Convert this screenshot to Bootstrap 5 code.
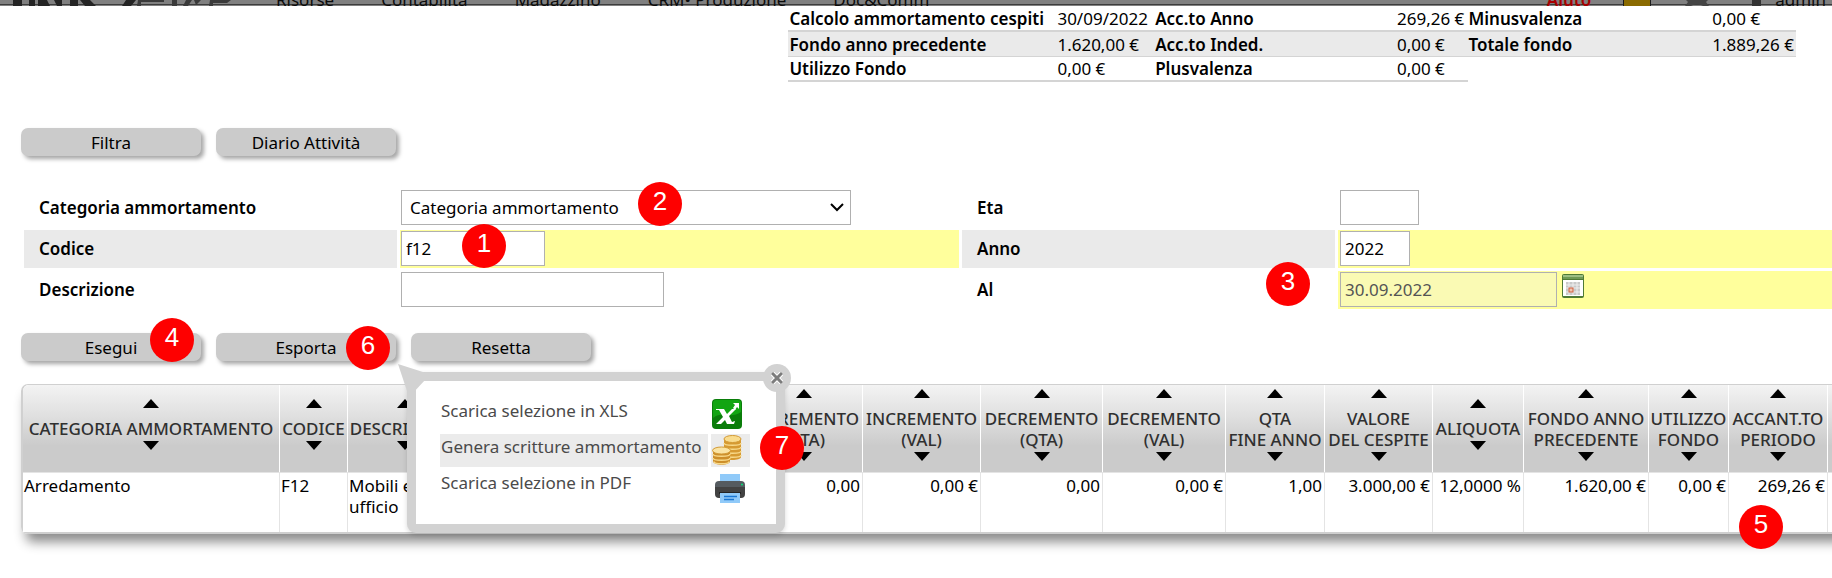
<!DOCTYPE html>
<html lang="it">
<head>
<meta charset="utf-8">
<meta name="viewport" content="width=device-width, initial-scale=1">
<title>Calcolo ammortamento cespiti</title>
<link rel="stylesheet" href="https://cdn.jsdelivr.net/npm/bootstrap@5.3.0/dist/css/bootstrap.min.css">
<style>
  body { font-family: "Noto Sans", "Open Sans", sans-serif; font-size: 17px; line-height: 21px; color: #000; background: #fff; overflow-x: hidden; }

  /* strip of the main menu left visible under the scrolled page */
  .topbar { height: 6px; overflow: hidden; background: linear-gradient(#808080 4px, #3c3c3c 4px, #3c3c3c 5px, #808080 5px); line-height: 12px; padding-left: 10px; padding-right: 6px; }
  .topbar a { color: #0c0c0c; text-decoration: none; white-space: nowrap; }
  .brand { width: 266px; height: 6px; flex: none; }
  .topbar .help { color: #a80000; font-weight: 600; }
  .menu-main { gap: 47px; }

  /* totals */
  .totals { width: 55%; margin-right: 36px; table-layout: fixed; border-collapse: collapse; white-space: nowrap; }
  .totals th, .totals td { padding: 1px 0 0 1px; height: 25px; border-bottom: 2px solid #d4d4d4; text-align: left; vertical-align: middle; }
  .totals th { font-weight: 600; }
  .totals .alt th, .totals .alt td { background: #eaeaea; border-bottom-width: 1px; }
  .totals .blank { border: 0; }

  /* grey action buttons */
  .actions { gap: 15px; padding-left: 21px; margin-top: 24px; }
  .actions.first { margin-top: 46px; }
  .act { width: 180px; height: 28px; border: 0; border-radius: 7px; background: #cbcbcb; color: #000; box-shadow: 3px 3px 4px #a6a6a6; padding: 0; }

  /* filter form */
  .filters { display: grid; grid-template-columns: 373fr 559fr 373fr 494fr; gap: 3px; padding-left: 24px; margin-top: 33px; }
  .filters > * { height: 38px; }
  .filters label { padding: 8px 0 0 15px; font-weight: 600; }
  .cell { padding: 1px 0 0 1px; position: relative; display: flex; align-items: flex-start; }
  .cell.wide { padding-left: 2px; }
  .shade { background: #eaeaea; }
  .req { background: #ffff9c; }
  .fld { height: 35px; border: 1px solid #b0b0b0; border-radius: 0; background: #fff; color: #000; padding: 0 4px; }
  .fld:disabled { background: #fafab4; color: #545454; opacity: 1; }
  .fld-select { width: 450px; padding: 0 28px 0 8px; appearance: none; background: #fff url("data:image/svg+xml,%3Csvg xmlns='http://www.w3.org/2000/svg' width='14' height='9'%3E%3Cpath d='M1 1l6 6 6-6' fill='none' stroke='%23000' stroke-width='2'/%3E%3C/svg%3E") no-repeat right 6px center; }
  .w-code { width: 144px; } .w-desc { width: 263px; } .w-age { width: 79px; } .w-year { width: 70px; } .w-date { width: 217px; }

  /* numbered markers laid over the page */
  .pin { position: absolute; z-index: 5; width: 44px; height: 44px; border-radius: 50%; background: #fe0000; color: #fff; font: 26px/38px "Liberation Sans", Arial, sans-serif; text-align: center; }
  .pin-1 { left: 62px; top: -6px; } .pin-2 { left: 238px; top: -7px; } .pin-3 { left: -72px; top: -9px; }
  .pin-4 { left: 129px; top: -15px; } .pin-6 { left: 130px; top: -7px; } .pin-7 { left: 344px; top: 45px; } .pin-5 { left: 10px; top: 32px; }

  /* export menu */
  .export-menu { position: absolute; z-index: 3; left: 191px; top: 39px; width: 378px; height: 161px; border: 9px solid #d2d2d2; border-radius: 9px; background: #fff; box-shadow: 0 2px 5px rgba(0,0,0,.15); }
  .tail { position: absolute; left: -18px; top: -17px; }
  .closer { position: absolute; right: -15px; top: -17px; width: 28px; height: 28px; border: 0; border-radius: 50%; background: #d2d2d2; padding: 0; display: flex; align-items: center; justify-content: center; }
  .choices { padding: 17px 26px 0 24px; gap: 3px; }
  .choice { display: grid; grid-template-columns: 1fr 39px; gap: 3px; height: 33px; color: #4a4a4a; text-decoration: none; }
  .choice span { padding: 2px 0 0 1px; white-space: nowrap; }
  .choice svg { display: block; margin: 1px 0 0 1px; }
  .choice.current > * , .choice.current .pic { background: #ebebeb; }

  /* asset grid */
  .grid-wrap { padding: 0 0 30px 21px; margin-top: 23px; overflow: hidden; }
  .assets { width: 1908px; table-layout: fixed; border-collapse: separate; border-spacing: 0; border: 1px solid #d0d0d0; border-left-width: 2px; border-bottom: 2px solid #cfcfcf; border-radius: 7px 0 0 7px; box-shadow: 4px 9px 12px -1px #8c8c8c; }
  .assets th { height: 87px; padding: 0 0 8px; vertical-align: middle; text-align: center; font-weight: 500; color: #303030; background: linear-gradient(#f3f3f3, #e0e0e0 35%, #cbcbcb 70%); border-right: 1px solid #fff; white-space: nowrap; }
  .assets th:first-child { border-top-left-radius: 6px; }
  .assets td { position: relative; height: 60px; padding: 2px 1px 0; vertical-align: top; background: #fff; border-right: 1px solid #e4e4e4; border-top: 1px solid #e4e4e4; }
  .assets td.num { text-align: right; padding-right: 2px; white-space: nowrap; }
  .assets th::before, .assets th::after { content: ""; display: block; width: 0; margin: 0 auto; border: 8px solid transparent; }
  .assets th::before { border-top: 0; border-bottom: 9px solid #000; margin-bottom: 10px; }
  .assets th::after { border-bottom: 0; border-top: 9px solid #000; margin-top: 2px; }
</style>
</head>
<body>

<header class="topbar d-flex align-items-end">
  <svg class="brand" viewBox="0 0 266 6" role="img" aria-label="UNO ERP">
    <path d="M3 0h9v6H3zM19 0h6v6h-6zM28 0h9l3 6H28zM44 0h8v6h-5zM60 0h8v6h-8zM70 0h10l6 6H75zM116 0h10l-5 6h-9z" fill="#242424"/>
    <path d="M128 0h26v2h-23v4h-4zM162 0h5v6h-5zM176 0h6l-4 6h-5zM184 0h7l-5 5zM200 0h21l-4 3h-14v3h-4z" fill="#3a3a3a"/>
  </svg>
  <nav class="menu-main d-flex flex-grow-1">
    <a href="#">Risorse</a><a href="#">Contabilità</a><a href="#">Magazzino</a><a href="#">CRM• Produzione</a><a href="#">Doc&amp;Comm</a>
  </nav>
  <nav class="d-flex align-items-end">
    <a href="#" class="help">Aiuto</a>
    <svg class="ms-4" width="160" height="6" aria-hidden="true">
      <path d="M8 0h28v6H8z" fill="#1c1c1c"/><path d="M9 0h26v6H9z" fill="#8a6a00"/>
      <path d="M70 6l3-4-2-2h22l-2 2 3 4h-6a8 5 0 0 0-12 0z" fill="#444"/><path d="M137 0h9v6h-9z" fill="#333"/>
    </svg>
    <a href="#">admin</a>
  </nav>
</header>

<main>
  <table class="totals ms-auto">
    <colgroup><col style="width:26.6%"><col style="width:9.7%"><col style="width:24%"><col style="width:7.1%"><col style="width:24.2%"><col style="width:8.4%"></colgroup>
    <tbody>
      <tr><th scope="row">Calcolo ammortamento cespiti</th><td>30/09/2022</td><th scope="row">Acc.to Anno</th><td>269,26 €</td><th scope="row">Minusvalenza</th><td>0,00 €</td></tr>
      <tr class="alt"><th scope="row">Fondo anno precedente</th><td>1.620,00 €</td><th scope="row">Acc.to Inded.</th><td>0,00 €</td><th scope="row">Totale fondo</th><td>1.889,26 €</td></tr>
      <tr><th scope="row">Utilizzo Fondo</th><td>0,00 €</td><th scope="row">Plusvalenza</th><td>0,00 €</td><td class="blank" colspan="2"></td></tr>
    </tbody>
  </table>

  <div class="actions first d-flex">
    <button type="button" class="act">Filtra</button>
    <button type="button" class="act">Diario Attività</button>
  </div>

  <form class="mb-0">
    <div class="filters">
      <label for="categoria">Categoria ammortamento</label>
      <div class="cell">
        <select id="categoria" class="fld fld-select"><option>Categoria ammortamento</option></select>
        <span class="pin pin-2">2</span>
      </div>
      <label for="eta">Eta</label>
      <div class="cell wide"><input id="eta" type="text" class="fld w-age"></div>

      <label for="codice" class="shade">Codice</label>
      <div class="cell req">
        <input id="codice" type="text" class="fld w-code" value="f12">
        <span class="pin pin-1">1</span>
      </div>
      <label for="anno" class="shade">Anno</label>
      <div class="cell wide req"><input id="anno" type="text" class="fld w-year" value="2022"></div>

      <label for="descrizione">Descrizione</label>
      <div class="cell"><input id="descrizione" type="text" class="fld w-desc"></div>
      <label for="al">Al</label>
      <div class="cell wide req">
        <input id="al" type="text" class="fld w-date" value="30.09.2022" disabled>
        <svg class="ms-1" width="24" height="27" viewBox="0 -2 24 27" role="img" aria-label="Calendario">
          <rect x="1" y="0" width="22" height="24" rx="2" fill="#4f7a35"/>
          <rect x="2" y="1" width="20" height="2" fill="#9cbf83"/><rect x="2" y="3" width="20" height="2" fill="#6f9a55"/>
          <rect x="2" y="6" width="20" height="16" fill="#fff"/>
          <rect x="5" y="8" width="14" height="13" fill="#c9c9c9"/>
          <path d="M5 11h14M5 14h14M5 18h14M8 8v13M12 8v13M16 8v13" stroke="#eee"/>
          <rect x="8" y="14" width="4" height="4" fill="#f2c4b0" stroke="#cf5e3c"/>
        </svg>
        <span class="pin pin-3">3</span>
      </div>
    </div>

    <div class="actions d-flex">
      <div class="position-relative"><button type="button" class="act">Esegui</button><span class="pin pin-4">4</span></div>
      <div class="position-relative">
        <button type="button" class="act" aria-expanded="true">Esporta</button><span class="pin pin-6">6</span>
        <div class="export-menu">
          <svg class="tail" width="30" height="30" aria-hidden="true"><path d="M0 0l28 9v6l-14 15h-4z" fill="#d2d2d2"/></svg>
          <button type="button" class="closer" aria-label="Chiudi"><svg width="12" height="12"><path d="M1 1l10 10M11 1L1 11" stroke="#fff" stroke-width="5"/><path d="M1 1l10 10M11 1L1 11" stroke="#7c7c7c" stroke-width="3"/></svg></button>
          <div class="choices d-flex flex-column">
            <a href="#" class="choice"><span>Scarica selezione in XLS</span>
              <span class="pic p-0"><svg width="30" height="30" viewBox="0 0 30 30" aria-hidden="true">
                <rect width="30" height="30" rx="4" fill="#0a7d0a"/><path d="M1 4a3 3 0 0 1 3-3h22a3 3 0 0 1 3 3v9C20 20 10 12 1 19z" fill="#12a512"/>
                <path d="M4 10h8l3 5 5-5h4l-7 7 3 6 3-1-1 3h-7l-2-4-4 4H4l7-7-4-7H4z" fill="#fff"/><path d="M21 4h6v6l-2-2-2 3-2-2 2-3z" fill="#fff"/></svg></span></a>
            <a href="#" class="choice current"><span>Genera scritture ammortamento</span>
              <span class="pic p-0"><svg width="30" height="30" viewBox="0 0 30 30" aria-hidden="true">
                <path d="M12 4v18c0 4 17 4 17 0V4z" fill="#d69a32"/>
                <path d="M12 8c0 3 17 3 17 0M12 12c0 3 17 3 17 0M12 16c0 3 17 3 17 0M12 20c0 3 17 3 17 0" fill="none" stroke="#f8d98a" stroke-width="1.500"/>
                <ellipse cx="20.500" cy="4" rx="8.500" ry="3.500" fill="#f9dc8e" stroke="#d39a35"/>
                <path d="M1 15v11c0 5 17 5 17 0V15z" fill="#cd8f2b"/>
                <path d="M1 19c0 3 17 3 17 0M1 23c0 3 17 3 17 0M2 26.500c0 3 15 3 15 0" fill="none" stroke="#f8d98a" stroke-width="1.500"/>
                <ellipse cx="9.500" cy="15.500" rx="9" ry="3.500" fill="#fae4a4" stroke="#d39a35"/></svg></span></a>
            <a href="#" class="choice"><span>Scarica selezione in PDF</span>
              <span class="pic p-0 ps-1 pt-1"><svg class="m-0" width="30" height="29" viewBox="0 0 30 29" aria-hidden="true">
                <path d="M5 0h20v9H5z" fill="#90caf9"/><path d="M4 7h22a4 4 0 0 1 4 4v4H0v-4a4 4 0 0 1 4-4z" fill="#555b60"/>
                <path d="M0 13h30v7a4 4 0 0 1-4 4H4a4 4 0 0 1-4-4z" fill="#424242"/><path d="M4 18h22v2H4z" fill="#242424"/>
                <circle cx="27" cy="10.500" r="1" fill="#00e676"/><path d="M5 19h20v10H5z" fill="#90caf9"/><path d="M9 22.500h13M9 25.500h10" stroke="#1976d2" stroke-width="1.500"/></svg></span></a>
          </div>
          <span class="pin pin-7">7</span>
        </div>
      </div>
      <button type="reset" class="act">Resetta</button>
    </div>
  </form>

  <div class="grid-wrap">
    <table class="assets">
      <colgroup><col style="width:257px"><col style="width:68px"><col style="width:115px"><col style="width:282px"><col style="width:118px"><col style="width:118px"><col style="width:122px"><col style="width:123px"><col style="width:99px"><col style="width:108px"><col style="width:91px"><col style="width:125px"><col style="width:80px"><col style="width:99px"><col></colgroup>
      <thead>
        <tr>
          <th>CATEGORIA AMMORTAMENTO</th><th>CODICE</th><th>DESCRIZIONE</th><th></th>
          <th>INCREMENTO<br>(QTA)</th><th>INCREMENTO<br>(VAL)</th><th>DECREMENTO<br>(QTA)</th><th>DECREMENTO<br>(VAL)</th>
          <th>QTA<br>FINE ANNO</th><th>VALORE<br>DEL CESPITE</th><th>ALIQUOTA</th><th>FONDO ANNO<br>PRECEDENTE</th>
          <th>UTILIZZO<br>FONDO</th><th>ACCANT.TO<br>PERIODO</th><th></th>
        </tr>
      </thead>
      <tbody>
        <tr>
          <td>Arredamento</td><td>F12</td><td>Mobili e<br>ufficio</td><td></td>
          <td class="num">0,00</td><td class="num">0,00 €</td><td class="num">0,00</td><td class="num">0,00 €</td>
          <td class="num">1,00</td><td class="num">3.000,00 €</td><td class="num">12,0000 %</td><td class="num">1.620,00 €</td>
          <td class="num">0,00 €</td><td class="num">269,26 €<span class="pin pin-5">5</span></td><td></td>
        </tr>
      </tbody>
    </table>
  </div>
</main>
<script src="https://cdn.jsdelivr.net/npm/bootstrap@5.3.0/dist/js/bootstrap.bundle.min.js"></script>
</body>
</html>
